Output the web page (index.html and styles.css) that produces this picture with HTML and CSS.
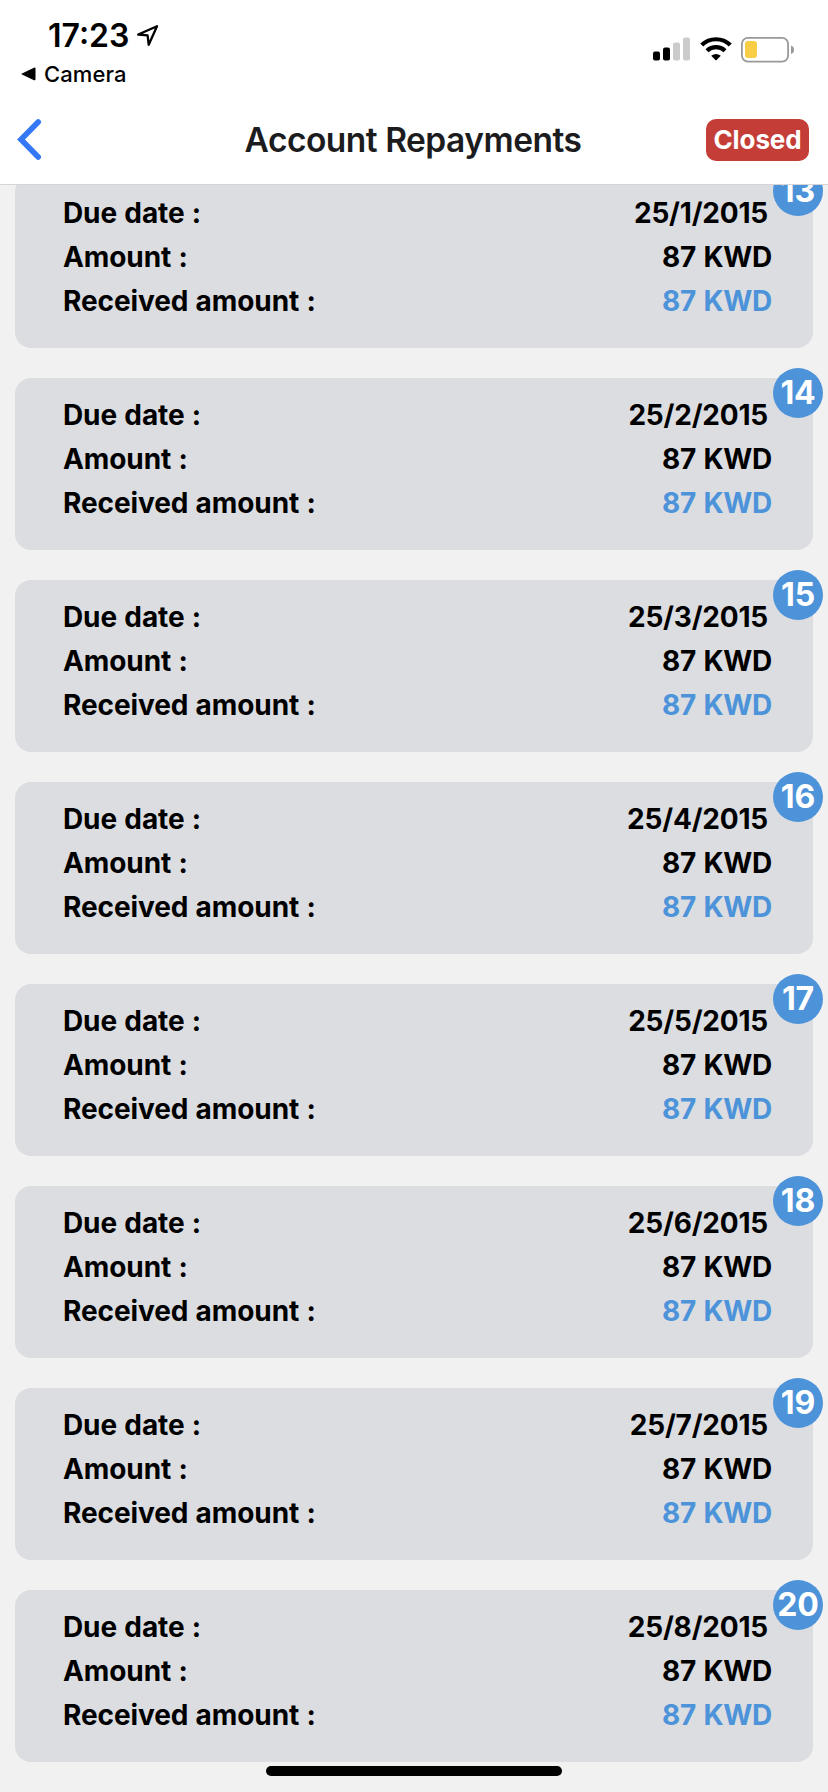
FILE: index.html
```html
<!DOCTYPE html>
<html lang="en">
<head>
<meta charset="utf-8">
<title>Account Repayments</title>
<link rel="stylesheet" href="styles.css">
</head>
<body>
<div class="screen">
  <header class="header">
    <div class="status">
      <div class="status-left">
        <div class="clock"><span class="time">17:23</span>
          <svg class="location" width="24" height="24" viewBox="0 0 24 24"><path d="M2.2 10.5 21 2.2 12.7 20.8 11.6 11.4Z" fill="none" stroke="#000" stroke-width="2.3" stroke-linejoin="round"/></svg>
        </div>
        <div class="return"><svg width="15" height="14" viewBox="0 0 15 14"><path d="M1 6.4 13 .7Q14.5.2 14.5 1.6V12.2Q14.5 13.7 13 13.2L1 7.6Q-.2 7 1 6.4Z"/></svg><span class="return-label">Camera</span></div>
      </div>
      <div class="indicators">
        <svg width="37" height="24" viewBox="0 0 37 24"><rect y="14.5" width="7" height="9" rx="2"/><rect x="10" y="10.5" width="7" height="13" rx="2"/><g fill="#cbcbcb"><rect x="20" y="5.5" width="7" height="18" rx="2"/><rect x="30" y=".5" width="7" height="23" rx="2"/></g></svg>
        <svg width="32" height="24" viewBox="0 0 32 24"><g fill="none" stroke="#000" stroke-width="4.2"><path d="M1.7 8.1A20.4 20.4 0 0 1 30.3 8.1"/><path d="M7 13.8A13 13 0 0 1 25 13.8"/></g><path d="M11.2 18.8Q16 15.2 20.8 18.8L16.6 23Q16 23.5 15.4 23Z"/></svg>
        <svg width="53" height="26" viewBox="0 0 53 26"><rect x=".9" y=".9" width="46.2" height="23.7" rx="6" fill="#fff" stroke="#999" stroke-width="1.8"/><rect x="4" y="4" width="12" height="17" rx="3" fill="#f7ce46"/><path d="M50 8.5Q53 9.5 53 12.7T50 17Z" fill="#999"/></svg>
      </div>
    </div>
    <nav class="nav">
      <svg class="back" width="28" height="42" viewBox="0 0 28 42"><path d="M24.2 3 7 20.5 24.2 38" fill="none" stroke="#3478f6" stroke-width="5.6" stroke-linecap="round" stroke-linejoin="miter"/></svg>
      <h1 class="title">Account Repayments</h1>
      <span class="state">Closed</span>
    </nav>
  </header>
  <main class="list">
    <section class="card"><span class="number">13</span><div class="row"><span>Due date :</span><span class="date">25/1/2015</span></div><div class="row"><span>Amount :</span><span class="value">87 KWD</span></div><div class="row"><span>Received amount :</span><span class="value received">87 KWD</span></div></section>
    <section class="card"><span class="number">14</span><div class="row"><span>Due date :</span><span class="date">25/2/2015</span></div><div class="row"><span>Amount :</span><span class="value">87 KWD</span></div><div class="row"><span>Received amount :</span><span class="value received">87 KWD</span></div></section>
    <section class="card"><span class="number">15</span><div class="row"><span>Due date :</span><span class="date">25/3/2015</span></div><div class="row"><span>Amount :</span><span class="value">87 KWD</span></div><div class="row"><span>Received amount :</span><span class="value received">87 KWD</span></div></section>
    <section class="card"><span class="number">16</span><div class="row"><span>Due date :</span><span class="date">25/4/2015</span></div><div class="row"><span>Amount :</span><span class="value">87 KWD</span></div><div class="row"><span>Received amount :</span><span class="value received">87 KWD</span></div></section>
    <section class="card"><span class="number">17</span><div class="row"><span>Due date :</span><span class="date">25/5/2015</span></div><div class="row"><span>Amount :</span><span class="value">87 KWD</span></div><div class="row"><span>Received amount :</span><span class="value received">87 KWD</span></div></section>
    <section class="card"><span class="number">18</span><div class="row"><span>Due date :</span><span class="date">25/6/2015</span></div><div class="row"><span>Amount :</span><span class="value">87 KWD</span></div><div class="row"><span>Received amount :</span><span class="value received">87 KWD</span></div></section>
    <section class="card"><span class="number">19</span><div class="row"><span>Due date :</span><span class="date">25/7/2015</span></div><div class="row"><span>Amount :</span><span class="value">87 KWD</span></div><div class="row"><span>Received amount :</span><span class="value received">87 KWD</span></div></section>
    <section class="card"><span class="number">20</span><div class="row"><span>Due date :</span><span class="date">25/8/2015</span></div><div class="row"><span>Amount :</span><span class="value">87 KWD</span></div><div class="row"><span>Received amount :</span><span class="value received">87 KWD</span></div></section>
  </main>
  <div class="home-indicator"></div>
</div>
</body>
</html>
```
FILE: styles.css
```css
* { box-sizing: border-box; }
body { margin: 0; font-family: Inter, "Liberation Sans", sans-serif; color: #000; }
svg { display: block; flex: none; }
.screen { position: relative; display: flex; flex-direction: column; height: 1792px; overflow: hidden; background: #f1f1f1; }
.header { flex: none; height: 185px; background: #fff; border-bottom: 1px solid #d5d5d7; }
.status { display: flex; justify-content: space-between; height: 96px; padding: 16px 34px 0 21px; }
.clock { display: flex; align-items: center; gap: 7px; height: 40px; padding-left: 27px; }
.time { font-size: 32px; font-weight: 600; line-height: 40px; }
.return { display: flex; align-items: center; gap: 8px; height: 36px; }
.return-label { font-size: 22px; font-weight: 500; line-height: 36px; letter-spacing: .1px; }
.indicators { display: flex; gap: 9.5px; padding-top: 21px; }
.nav { display: grid; grid-template-columns: 140px 1fr 140px; align-items: center; height: 88px; padding: 0 19px 0 14px; }
.title { margin: 0; padding-left: 3px; font-size: 33.5px; font-weight: 600; line-height: 45px; text-align: center; color: #1c1c1e; letter-spacing: -.5px; white-space: nowrap; }
.state { justify-self: end; width: 103px; height: 42px; border-radius: 10px; background: #c43e37; color: #fff; font-size: 26px; font-weight: 700; line-height: 41px; letter-spacing: -.1px; text-align: center; }
.list { flex: 1; display: flex; flex-direction: column; gap: 30px; min-height: 0; overflow: hidden; padding: 0 15px; }
.card { position: relative; flex: none; height: 172px; padding: 15px 41px 0 48px; border-radius: 16px; background: #dcdde1; }
.card:first-child { margin-top: -9px; }
.row { display: flex; justify-content: space-between; font-size: 28px; font-weight: 700; line-height: 44px; letter-spacing: -.1px; word-spacing: .8px; white-space: nowrap; }
.date { padding-right: 4px; letter-spacing: -.2px; }
.value { letter-spacing: -.3px; word-spacing: 1.2px; }
.received { color: #4d93d9; }
.number { position: absolute; top: -10px; right: -10px; width: 50px; height: 50px; border-radius: 50%; background: #4d93d9; color: #fff; font-size: 32px; font-weight: 700; line-height: 49px; letter-spacing: -.1px; text-align: center; }
.home-indicator { position: absolute; left: 266px; bottom: 16px; width: 296px; height: 10px; border-radius: 5px; background: #000; }
```
